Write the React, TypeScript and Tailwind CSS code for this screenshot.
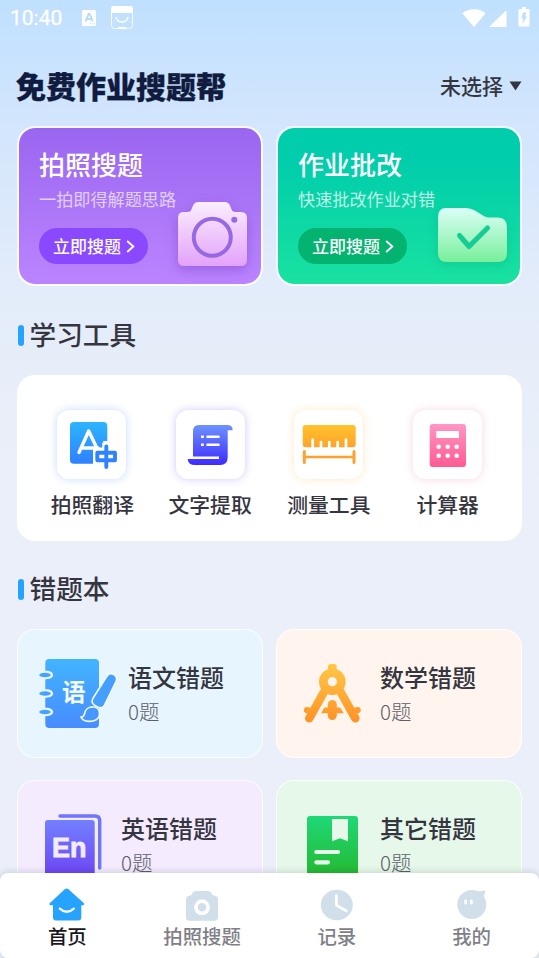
import React from 'react';

const CJK = "font-['Noto_Sans_CJK_SC',sans-serif]";

function Gradient({ id, from, to }: { id: string; from: string; to: string }) {
  return (
    <defs>
      <linearGradient id={id} x1="0" y1="0" x2="0" y2="1">
        <stop offset="0" stopColor={from} />
        <stop offset="1" stopColor={to} />
      </linearGradient>
    </defs>
  );
}

function StatusBar() {
  return (
    <div className="flex h-9 shrink-0 items-center pl-[10px] pr-[9px] text-white">
      <span className="w-[72px] pt-px font-[Roboto] text-[21px] leading-none [-webkit-text-stroke:0.3px_white]">10:40</span>
      <svg width="14" height="16" viewBox="0 0 14 16">
        <rect width="14" height="16" rx="1.5" fill="#fff" />
        <path d="M3.6 11.4 6.6 4h1l3 7.4M5 9h4.4" fill="none" stroke="#b9dcfb" strokeWidth="1.9" />
        <path d="M8 13.8h1m1 0h1m1 0h1" stroke="#b9dcfb" strokeWidth="1" />
      </svg>
      <svg className="ml-[15px] -mt-px" width="22" height="23" viewBox="0 0 22 23">
        <rect x="0.5" y="0.5" width="21" height="22" rx="3" fill="none" stroke="#fff" strokeOpacity="0.85" />
        <path d="M0 7V3a3 3 0 0 1 3-3h16a3 3 0 0 1 3 3v4zM7 21h8v2H7z" fill="#fff" />
        <path d="M5 11c1 6.500 11 6.500 12 0" fill="none" stroke="#fff" strokeWidth="1.600" />
      </svg>
      <div className="ml-auto flex items-center">
        <svg className="-mt-px" width="24" height="18" viewBox="0 0 24 18">
          <path d="M.3 4.2C7-1.2 17-1.2 23.7 4.2L12 18z" fill="#fff" />
        </svg>
        <svg className="ml-[3px]" width="18" height="17" viewBox="0 0 18 17">
          <path d="M17.5 0v17H0z" fill="#fff" />
        </svg>
        <svg className="ml-[11px] -mt-[2px]" width="12" height="20" viewBox="0 0 12 20">
          <path d="M4 0h4v2h2.500a1 1 0 0 1 1 1v15.500a1 1 0 0 1-1 1h-9a1 1 0 0 1-1-1V3a1 1 0 0 1 1-1H4z" fill="#fff" />
          <path d="M5 5.500h3.500L7 9.300h2L4.500 17l.7-5.500H3.200z" fill="#bfdffb" />
        </svg>
      </div>
    </div>
  );
}

function CameraArt() {
  return (
    <svg className="overflow-visible drop-shadow-[0_4px_6px_rgba(105,50,190,0.4)]" width="69" height="64" viewBox="0 0 69 64">
      <Gradient id="camera" from="#fbeeff" to="#e3a2fb" />
      <path d="M5 10h4c3 0 4-1 5-4l1-2.500Q16.500 0 20 0h27q3.500 0 5 3.500L53 6c1 3 2 4 5 4h5q6 0 6 6v42q0 6-6 6H6q-6 0-6-6V16q0-6 5-6z" fill="url(#camera)" />
      <circle cx="34.300" cy="35.300" r="18.500" fill="none" stroke="#9669e2" strokeWidth="4" />
      <circle cx="56.300" cy="17.700" r="3" fill="#9669e2" />
    </svg>
  );
}

function FolderArt() {
  return (
    <svg className="overflow-visible drop-shadow-[0_3px_5px_rgba(0,150,100,0.25)]" width="69" height="54" viewBox="0 0 69 54">
      <Gradient id="folder" from="#dbfff7" to="#78ef9b" />
      <path d="M8 0h20q5 0 9 2.500l8 5q3 1.900 6 1.900h9q9 0 9 10V45q0 9-9 9H9q-9 0-9-9V9q0-9 8-9z" fill="url(#folder)" />
      <path d="M21.500 27.500 31 38.500 49.500 20" fill="none" stroke="#14cc94" strokeWidth="5" strokeLinecap="round" strokeLinejoin="round" />
    </svg>
  );
}

function PromoCard(props: { title: string; note: string; tone: string; button: string; noteTone: string; artPad: string; art: React.ReactNode }) {
  return (
    <div className={`flex h-[160px] justify-between rounded-[18px] border-2 border-white/80 bg-clip-padding pl-5 text-white ${props.tone}`}>
      <div className="w-[136px] shrink-0 whitespace-nowrap pt-[19px]">
        <div className="text-[26px] leading-[34px] font-medium">{props.title}</div>
        <div className={`mt-[6px] text-[17.150px] leading-6 ${props.noteTone}`}>{props.note}</div>
        <div className={`mt-[17px] flex h-9 w-[109px] items-center rounded-full pl-[14px] text-[17px] font-medium ${props.button}`}>
          <span className="leading-6">立即搜题</span>
          <svg className="ml-[5px]" width="9" height="13" viewBox="0 0 9 13">
            <path d="M1.200 1 7.300 6.500 1.200 12" fill="none" stroke="#fff" strokeWidth="1.900" />
          </svg>
        </div>
      </div>
      <div className={`self-end ${props.artPad}`}>{props.art}</div>
    </div>
  );
}

function SectionTitle({ text, size }: { text: string; size: string }) {
  return (
    <div className={`flex shrink-0 items-center pl-[0.500px] ${size}`}>
      <div className="h-[21px] w-[6px] rounded-[3px] bg-[#26a3ff]" />
      <div className="-mt-[3px] ml-[6px] text-[26.700px] leading-8 text-[#35353f] font-medium">{text}</div>
    </div>
  );
}

function TranslateIcon() {
  return (
    <svg width="69" height="69" viewBox="0 0 69 69">
      <Gradient id="translate" from="#2cb5ff" to="#2f80ff" />
      <path d="M17 12h29.300q4 0 4 4v15h-4v6.500H36v16.200H17q-4 0-4-4V16q0-4 4-4z" fill="url(#translate)" />
      <path d="M22 42.500 31.700 21 41 40.500M26 38h15" fill="none" stroke="#fff" strokeWidth="3.400" strokeLinecap="round" strokeLinejoin="round" />
      <path d="M29.500 34.800h4.400l-2.200-5z" fill="#2b9bff" />
      <rect x="36.300" y="39" width="14" height="16" fill="#fff" />
      <rect x="45.300" y="32.700" width="8" height="10" fill="#fff" />
      <path d="M40.300 42.700h17.700v7.600H40.300zM49.300 36.500v20.600" fill="none" stroke="#2f83ff" strokeWidth="3.900" strokeLinecap="round" strokeLinejoin="round" />
    </svg>
  );
}

function ScrollIcon() {
  return (
    <svg width="69" height="69" viewBox="0 0 69 69">
      <Gradient id="scroll" from="#6c92ff" to="#3e2bff" />
      <path d="M23 15h28q5.700 0 5.700 5.300h-5V47q0 8-7.700 8H19q-6.500 0-7.300-5.500V49H43v-2.500H17V21q0-6 6-6z" fill="url(#scroll)" />
      <path d="M31.500 26.700H42.500M31.500 34.700H42.500" stroke="#fff" strokeWidth="2.600" strokeLinecap="round" />
      <path d="M25 26.700h2.800M25 34.700h2.800" stroke="#fff" strokeWidth="2.600" />
    </svg>
  );
}

function RulerIcon() {
  return (
    <svg width="69" height="69" viewBox="0 0 69 69">
      <Gradient id="ruler" from="#ffc32c" to="#ffa32b" />
      <rect x="8.700" y="15" width="53" height="22.300" rx="3" fill="url(#ruler)" />
      <path d="M18.700 39V29.500M27 39v-7M35.300 39v-7M43.700 39v-7M52 39V29.500" stroke="#fff" strokeWidth="2.700" strokeLinecap="round" />
      <path d="M10.300 41.500v11M60 41.500v11" stroke="#ffa12f" strokeWidth="3" strokeLinecap="round" />
      <path d="M10.300 47H60" stroke="#ffa12f" strokeWidth="2.600" />
    </svg>
  );
}

function CalculatorIcon() {
  return (
    <svg width="69" height="69" viewBox="0 0 69 69">
      <Gradient id="calculator" from="#ff97c4" to="#ff5a92" />
      <rect x="16.700" y="14" width="36.300" height="43" rx="3" fill="url(#calculator)" />
      <rect x="23.300" y="21" width="22.700" height="7" fill="#fff" />
      {[36.7, 45.7].map((y) => [25.7, 34.7, 43.7].map((x) => <circle key={`${x}-${y}`} cx={x} cy={y} r="2.300" fill="#fff" />))}
    </svg>
  );
}

function ChineseIcon() {
  return (
    <svg className="overflow-visible" width="78" height="70" viewBox="0 0 78 70">
      <Gradient id="chinese" from="#42b4ff" to="#488cff" />
      <rect x="6.300" width="53.700" height="69" rx="4" fill="url(#chinese)" />
      {[16, 34.5, 53].map((y) => (
        <g key={y}>
          <path d={`M4 ${y - 4.2}h3c9.500 0 9.500 8.400 0 8.400H4z`} fill="#eaf6ff" />
          <ellipse cx="6" cy={y} rx="5.800" ry="2.200" fill="#46a2ff" />
        </g>
      ))}
      <text x="34.700" y="41.700" textAnchor="middle" fontSize="23.500" fontWeight="700" fontFamily="Noto Sans CJK SC, sans-serif" fill="#f2faff">语</text>
      <path d="M68 17c3-4.800 11.800-1 9 5.500L65.500 46c-2 4.200-6 3-8.500 1.200-3.500-2.200-5.200-4-3-8z" fill="#469fff" stroke="#eefaff" strokeWidth="1.600" strokeLinejoin="round" />
      <path d="M41.800 58c2.700.3 3.400-1.500 3.900-4 1.800-8.200 14.500-8 14.800 0 .2 6.500-5.500 8.600-10.500 8.400-4-.2-7-1.600-8.200-4.400z" fill="#4896ff" stroke="#eefaff" strokeWidth="1.600" strokeLinejoin="round" />
    </svg>
  );
}

function CompassIcon() {
  return (
    <svg width="59" height="60" viewBox="0 0 59 60">
      <defs>
        <linearGradient id="compass" gradientUnits="userSpaceOnUse" x1="0" y1="0" x2="0" y2="59">
          <stop offset="0" stopColor="#ffc846" />
          <stop offset="1" stopColor="#ff9127" />
        </linearGradient>
      </defs>
      <g stroke="url(#compass)" fill="none" strokeLinecap="round">
        <path d="M21 28 6.300 54.300M37.600 28 52.300 54.300" strokeWidth="8.500" />
        <path d="M3.800 46 9 47.500M54.800 46 49.600 47.500" strokeWidth="6" />
      </g>
      <rect x="24.800" y="36" width="9" height="20" rx="4.500" fill="url(#compass)" />
      <path d="M25 7V2.500Q25 0 27.500 0h3.700q2.500 0 2.500 2.500V7z" fill="url(#compass)" />
      <path d="M21.500 43.500h15.600l3.600 5.800H18z" fill="url(#compass)" />
      <circle cx="29.300" cy="17.700" r="13.300" fill="url(#compass)" />
      <circle cx="29.300" cy="17.700" r="4.600" fill="#fff5ee" />
    </svg>
  );
}

function EnglishIcon() {
  return (
    <svg width="57" height="70" viewBox="0 0 57 70">
      <Gradient id="english" from="#7280ff" to="#6c3ff2" />
      <rect y="6" width="49.700" height="62" rx="3" fill="url(#english)" />
      <path d="M15 2H50q4.700 0 4.700 4.700V54" fill="none" stroke="#6f75fc" strokeWidth="3.400" strokeLinecap="round" />
      <text x="7" y="43.300" fontSize="27" fontWeight="700" fontFamily="Liberation Sans, sans-serif" fill="#f4ebff" stroke="#f4ebff" strokeWidth="0.800">En</text>
    </svg>
  );
}

function OtherIcon() {
  return (
    <svg width="51" height="68" viewBox="0 0 51 68">
      <Gradient id="other" from="#1ed877" to="#25b92e" />
      <rect width="51" height="62" rx="3" fill="url(#other)" />
      <path d="M25 3h16v22.300l-8-3-8 3z" fill="#e6f8ea" />
      <path d="M9.300 36H31M9.300 46.300H21" stroke="#e6f8ea" strokeWidth="4.200" strokeLinecap="round" />
    </svg>
  );
}

const tools = [
  { name: '拍照翻译', icon: <TranslateIcon />, glow: 'shadow-[0_0_8px_rgba(70,130,255,0.3)]', label: 'pl-[2px]' },
  { name: '文字提取', icon: <ScrollIcon />, glow: 'shadow-[0_0_8px_rgba(100,70,255,0.3)]', label: '' },
  { name: '测量工具', icon: <RulerIcon />, glow: 'shadow-[0_0_8px_rgba(255,180,60,0.3)]', label: '' },
  { name: '计算器', icon: <CalculatorIcon />, glow: 'shadow-[0_0_8px_rgba(220,90,140,0.25)]', label: '' },
];

const books = [
  { name: '语文错题', icon: <ChineseIcon />, tone: 'bg-[#e7f5ff]', slot: 'w-[109px] pl-5 pt-[28px]' },
  { name: '数学错题', icon: <CompassIcon />, tone: 'bg-[#fff5ee]', slot: 'w-[102px] pl-[25px] pt-[33px]' },
  { name: '英语错题', icon: <EnglishIcon />, tone: 'bg-[#f4ebff]', slot: 'w-[102px] pl-[26px] pt-[32px]' },
  { name: '其它错题', icon: <OtherIcon />, tone: 'bg-[#e6f8ea]', slot: 'w-[102px] pl-[29px] pt-[34px]' },
];

const tabs = [
  {
    name: '首页',
    color: 'text-[#18181c]',
    icon: (
      <>
        <path d="M15.800 2.200q1.900-1.500 3.700 0L34.700 16c1 1 .5 2.300-.8 2.300h-1.600V30.500q0 3-3 3H7q-3 0-3-3V18.300H1.700C.3 18.300 0 17 .900 16z" fill="#26a3ff" />
        <path d="M10.800 21.600q7 6.400 14 0" fill="none" stroke="#fff" strokeWidth="2.300" strokeLinecap="round" />
      </>
    ),
  },
  {
    name: '拍照搜题',
    color: 'text-[#7f7f87]',
    icon: (
      <>
        <path d="M5 8.700c2 0 2.500-.5 3.200-2.200Q9.200 4 12 4h12q2.800 0 3.800 2.500c.7 1.700 1.200 2.200 3.200 2.200q3 .5 3 3.500v18q0 3.500-3.500 3.500h-25Q2 33.700 2 30.200v-18q0-3 3-3.500z" fill="#d0dfea" />
        <circle cx="18" cy="20.300" r="6.100" fill="none" stroke="#fff" strokeWidth="3.700" />
      </>
    ),
  },
  {
    name: '记录',
    color: 'text-[#7f7f87]',
    icon: (
      <>
        <ellipse cx="17.800" cy="18" rx="16" ry="15.300" fill="#d0dfea" />
        <path d="M17.400 8.700v9.600l9.800 5.500" fill="none" stroke="#fff" strokeWidth="2.700" strokeLinecap="round" strokeLinejoin="round" />
      </>
    ),
  },
  {
    name: '我的',
    color: 'text-[#7f7f87]',
    icon: (
      <>
        <circle cx="17.800" cy="17.500" r="14.500" fill="#d0dfea" />
        <path d="M22 4.500q5 0 9.300-1.300Q31.500 7 29 11z" fill="#d0dfea" />
        <path d="M11.700 13.800v2.400M17.400 13.800v2.400" stroke="#fff" strokeWidth="2.700" strokeLinecap="round" />
      </>
    ),
  },
];

export default function App() {
  return (
    <div className={`flex h-[958px] w-[539px] flex-col overflow-hidden bg-[linear-gradient(180deg,#bfe0ff_0px,#d1e5fd_110px,#e3ecfa_290px,#e9eff9_420px,#ebeff9_560px)] ${CJK}`}>
      <StatusBar />
      <div className="flex min-h-0 flex-1 flex-col overflow-hidden px-[17px]">
        <header className="flex h-[90px] shrink-0 items-center justify-between pt-[7px]">
          <h1 className="-ml-px text-[30px] leading-9 font-black text-[#101b40] [-webkit-text-stroke:0.3px_#101b40]">免费作业搜题帮</h1>
          <div className="flex items-center pt-px text-[21px] leading-7 font-medium text-[#35353f]">
            未选择
            <svg className="ml-[6px] mt-px" width="13" height="10" viewBox="0 0 13 10">
              <path d="M.5.500h12l-6 9z" fill="#35353f" />
            </svg>
          </div>
        </header>

        <div className="grid shrink-0 grid-cols-2 gap-[13px]">
          <PromoCard title="拍照搜题" note="一拍即得解题思路" tone="bg-[linear-gradient(180deg,#9a66f0,#bb84ff)]" noteTone="text-white/65" button="bg-[#8a48ff]" artPad="pb-[18px] pr-[14px]" art={<CameraArt />} />
          <PromoCard title="作业批改" note="快速批改作业对错" tone="bg-[linear-gradient(180deg,#00cdac_20%,#19e2a0)]" noteTone="text-white/75" button="bg-[#03b36f]" artPad="pb-[22px] pr-[13px]" art={<FolderArt />} />
        </div>

        <SectionTitle text="学习工具" size="h-[89px] pt-[10px]" />
        <div className="grid h-[166px] shrink-0 grid-cols-4 rounded-[18px] bg-white px-[15px] pt-[35px]">
          {tools.map((t) => (
            <div key={t.name} className="flex flex-col items-center">
              <div className={`size-[69px] rounded-xl bg-white ${t.glow}`}>{t.icon}</div>
              <div className={`mt-[13px] text-[20.800px] leading-6 font-medium text-[#35353f] ${t.label}`}>{t.name}</div>
            </div>
          ))}
        </div>

        <SectionTitle text="错题本" size="h-[88px] pt-[9px]" />
        <div className="grid shrink-0 grid-cols-2 gap-x-[13px] gap-y-[22px]">
          {books.map((b) => (
            <div key={b.name} className={`flex h-[129px] rounded-[18px] border border-white/85 p-px ${b.tone}`}>
              <div className={`shrink-0 ${b.slot}`}>{b.icon}</div>
              <div className="pt-[32px] whitespace-nowrap">
                <div className="text-[24px] leading-7 font-medium text-[#35353f]">{b.name}</div>
                <div className="mt-[9px] text-[20.500px] leading-[22px] font-light text-[#5c5c68]">0题</div>
              </div>
            </div>
          ))}
        </div>
      </div>

      <nav className="relative grid h-[85px] shrink-0 grid-cols-4 rounded-lg bg-white pt-[14px] shadow-[0_0_8px_rgba(0,0,0,0.18)]">
        {tabs.map((t) => (
          <div key={t.name} className="flex flex-col items-center">
            <svg width="36" height="36" viewBox="0 0 36 36">{t.icon}</svg>
            <div className={`text-[19.400px] leading-[26px] font-medium ${t.color}`}>{t.name}</div>
          </div>
        ))}
      </nav>
    </div>
  );
}
